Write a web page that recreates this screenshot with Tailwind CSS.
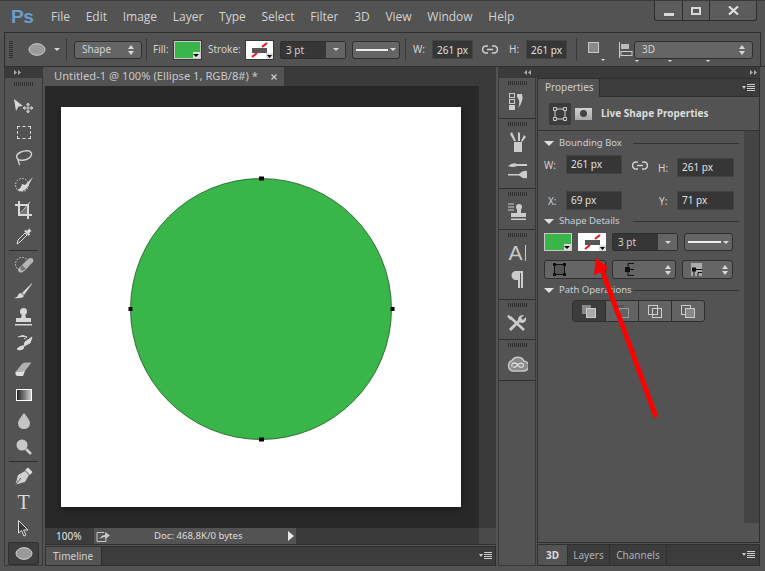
<!DOCTYPE html>
<html lang="en">
<head>
  <meta charset="UTF-8" />
  <title>Photoshop CS6</title>
  <script src="https://cdn.jsdelivr.net/npm/@tailwindcss/browser@4"></script>
</head>
<body class="bg-[#535353]">
<div class="relative w-[765px] h-[571px] overflow-hidden bg-[#535353] border-t border-[#3a3a3a] text-[#d2d2d2] text-[10px] whitespace-nowrap font-['Noto_Sans',sans-serif]">

  <!-- menu bar -->
  <div class="flex items-start h-[31px]">
    <div class="ml-[11px] mt-[2px] w-[40px] h-[28px] text-[#6b9ccc] text-[19px] tracking-[-0.5px] leading-[28px] font-bold font-['Liberation_Sans',sans-serif]">Ps</div>
    <div class="flex gap-[15.700px] mt-[7px] text-[12px] leading-[18px] font-['Open_Sans',sans-serif]">
      <span>File</span><span>Edit</span><span>Image</span><span>Layer</span><span>Type</span><span>Select</span><span>Filter</span><span>3D</span><span>View</span><span>Window</span><span>Help</span>
    </div>
    <div class="ml-auto mr-[8px] flex h-[20px] border border-t-0 border-[#2e2e2e] rounded-b-[3px] bg-[#5c5c5c] w-[103px]">
      <div class="w-[28px] flex items-end justify-center pb-[4px] border-r border-[#2e2e2e]"><div class="w-[10px] h-[3px] bg-[#d8d8d8]"></div></div>
      <div class="w-[27px] flex items-center justify-center border-r border-[#2e2e2e]"><div class="w-[10px] h-[8px] border-2 border-[#d8d8d8]"></div></div>
      <div class="flex-1 flex items-center justify-center">
        <svg width="11" height="9" viewBox="0 0 11 9"><path d="M1 .5 L10 8.500 M10 .5 L1 8.500" stroke="#dedede" stroke-width="2.200"/></svg>
      </div>
    </div>
  </div>

  <!-- options bar -->
  <div class="mx-[4px] h-[34px] border border-[#2f2f2f] border-b-0 flex items-center">
    <div class="ml-[4px] w-[4px] h-[18px] bg-[repeating-linear-gradient(#2f2f2f_0_1px,transparent_1px_2px)]"></div>
    <svg class="ml-[15px]" width="18" height="13" viewBox="0 0 18 13"><ellipse cx="9" cy="6.500" rx="8" ry="5.800" fill="#9a9a9a" stroke="#cfcfcf"/></svg>
    <div class="ml-[8px] border-x-[3px] border-x-transparent border-t-[3px] border-t-[#d8d8d8]"></div>
    <div class="ml-[6px] w-px h-[23px] bg-[#3a3a3a]"></div>
    <div class="ml-[7px] w-[68px] h-[18px] rounded-[3px] border border-[#2f2f2f] bg-[#656565] flex items-center px-[7px]">
      <span class="flex-1">Shape</span>
      <svg width="6" height="10" viewBox="0 0 6 10"><path d="M3 0 L6 4 H0 Z M3 10 L0 6 H6 Z" fill="#d8d8d8"/></svg>
    </div>
    <div class="ml-[4px] w-px h-[23px] bg-[#3a3a3a]"></div>
    <span class="ml-[6px] w-[21px]">Fill:</span>
    <div class="w-[27px] h-[18px] border border-[#c8c8c8] bg-[#39b54a] relative outline outline-[#3a3a3a]">
      <div class="absolute right-0 bottom-0 w-[7px] h-[6px] bg-[#dcdcdc]"></div>
      <div class="absolute right-[1px] bottom-[1px] border-x-[3px] border-x-transparent border-t-[3px] border-t-black"></div>
    </div>
    <span class="ml-[7px] w-[38px]">Stroke:</span>
    <svg width="27" height="18" viewBox="0 0 27 18" class="outline outline-[#3a3a3a]">
      <rect width="27" height="18" fill="#fff"/><rect x="6" y="7" width="15" height="5" fill="#555"/>
      <path d="M16 6 L21 2 M6 16 L11 12" stroke="#e11" stroke-width="2"/><rect x="20" y="12" width="7" height="6" fill="#ddd"/>
      <path d="M21 14 H26 L23.500 17 Z" fill="#000"/>
    </svg>
    <div class="ml-[7px] w-[66px] h-[18px] rounded-[2px] border border-[#2f2f2f] flex">
      <span class="flex-1 bg-[#363636] pl-[5px] leading-[17px]">3 pt</span>
      <div class="w-[19px] bg-[#656565] flex items-center justify-center"><div class="border-x-[3px] border-x-transparent border-t-[3px] border-t-[#d8d8d8]"></div></div>
    </div>
    <div class="ml-[6px] w-[48px] h-[18px] rounded-[3px] border border-[#2f2f2f] bg-[#656565] flex items-center px-[3px] gap-[2px]">
      <div class="flex-1 h-[2px] bg-[#eeeeee]"></div>
      <div class="border-x-[3px] border-x-transparent border-t-[3px] border-t-[#d8d8d8]"></div>
    </div>
    <div class="ml-[5px] w-px h-[23px] bg-[#3a3a3a]"></div>
    <span class="ml-[7px] w-[19px]">W:</span>
    <div class="w-[41px] h-[19px] bg-[#363636] border border-[#444] text-center leading-[18px] text-[#e0e0e0]">261 px</div>
    <svg class="ml-[9px]" width="16" height="9" viewBox="0 0 16 9"><path d="M6 1 H4 a3.500 3.500 0 0 0 0 7 H6 M10 1 H12 a3.500 3.500 0 0 1 0 7 H10 M5 4.500 H11" stroke="#d0d0d0" stroke-width="1.600" fill="none"/></svg>
    <span class="ml-[11px] w-[17px]">H:</span>
    <div class="w-[41px] h-[19px] bg-[#363636] border border-[#444] text-center leading-[18px] text-[#e0e0e0]">261 px</div>
    <div class="ml-[9px] w-px h-[23px] bg-[#3a3a3a]"></div>
    <div class="ml-[11px] w-[11px] h-[11px] -mt-[4px] border border-[#c8c8c8] bg-[#8a8a8a] relative">
      <div class="absolute left-[12px] top-[16px] border-x-[2px] border-x-transparent border-t-[2px] border-t-[#e0e0e0]"></div>
    </div>
    <svg class="ml-[20px]" width="15" height="16" viewBox="0 0 15 16"><path d="M.5 0 V16" stroke="#ccc"/><rect x="2" y="2" width="8" height="5" fill="#bbb"/><rect x="2" y="9.500" width="11" height="4" fill="none" stroke="#ccc"/></svg>
    <div class="relative w-[119px] h-[18px] rounded-[3px] border border-[#2f2f2f] bg-[#656565] flex items-center px-[7px]">
      <span class="flex-1">3D</span>
      <svg width="6" height="10" viewBox="0 0 6 10"><path d="M3 0 L6 4 H0 Z M3 10 L0 6 H6 Z" fill="#d8d8d8"/></svg>
      <div class="absolute left-0 top-[18px] border-x-[2px] border-x-transparent border-t-[2px] border-t-[#e0e0e0]"></div>
      <div class="absolute left-[33px] top-[18px] border-x-[2px] border-x-transparent border-t-[2px] border-t-[#e0e0e0]"></div>
      <div class="absolute left-[71px] top-[18px] border-x-[2px] border-x-transparent border-t-[2px] border-t-[#e0e0e0]"></div>
    </div>
  </div>

  <!-- work area -->
  <div class="flex h-[500px] ml-[4px] border-t border-[#2f2f2f]">

    <!-- tools -->
    <div class="w-[39px] flex flex-col border-x border-[#3a3a3a] border-b">
      <div class="h-[11px] bg-[#3a3a3a] flex items-center pl-[9px]">
        <svg width="7" height="5" viewBox="0 0 7 5"><path d="M0 0 L3 2.500 L0 5 Z M4 0 L7 2.500 L4 5 Z" fill="#aaa"/></svg>
      </div>
      <div class="mt-[4px] mx-auto w-[19px] h-[4px] bg-[repeating-linear-gradient(90deg,#2f2f2f_0_1px,transparent_1px_2px)]"></div>
      <div class="mt-[7px] flex flex-col items-center">
        <div class="h-[26px] flex items-center justify-center"><svg width="20" height="16" viewBox="0 0 20 16"><path d="M0 1 L9 8 L4.500 8.500 L2 13 Z" fill="#d8d8d8"/><path d="M14 5 V15 M9 10 H19 M14 5 l-1.500 2 h3 Z M14 15 l-1.500-2 h3 Z M9 10 l2-1.500 v3 Z M19 10 l-2-1.500 v3 Z" stroke="#d0d0d0" fill="none"/></svg></div>
        <div class="h-[26px] flex items-center justify-center"><div class="w-[14px] h-[13px] border border-dashed border-[#d8d8d8]"></div></div>
        <div class="h-[26px] flex items-center justify-center"><svg width="18" height="16" viewBox="0 0 18 16"><path d="M2 8 C0 3 9 0 14 1 C19 3 16 9 9 10 C6 10.500 3 10 2 8 Z M2 8 C4 10 3 13 5 15" stroke="#cfcfcf" stroke-width="1.400" fill="none"/></svg></div>
        <div class="h-[26px] flex items-center justify-center"><svg width="20" height="17" viewBox="0 0 20 17"><circle cx="8" cy="9" r="6.500" stroke="#d8d8d8" stroke-dasharray="1.500 1.500" fill="none"/><path d="M19 1 L11 9 L8 8 Q7 13 3 14 Q9 17 13 12 Z" fill="#d8d8d8"/></svg></div>
        <div class="h-[26px] flex items-center justify-center"><svg width="17" height="18" viewBox="0 0 17 18"><path d="M4 0 V14 H17 M0 4 H13 V18" stroke="#d8d8d8" stroke-width="2" fill="none"/><path d="M4 14 L15 1" stroke="#d8d8d8"/><path d="M5 13 L12 5 V13 Z" fill="#777"/></svg></div>
        <div class="h-[26px] flex items-center justify-center"><svg width="16" height="17" viewBox="0 0 16 17"><path d="M1 16 L2 12 L9 5 L11 7 L4 14 Z" fill="none" stroke="#d8d8d8"/><path d="M8 3 L13 8 L14 6 L13 5 L15.500 3 L13 .5 L11 3 L10 2 Z" fill="#d8d8d8"/></svg></div>
        <div class="my-[1px] w-[29px] h-px bg-[#2f2f2f]"></div>
        <div class="h-[26px] flex items-center justify-center"><svg width="20" height="18" viewBox="0 0 20 18"><circle cx="8" cy="8" r="6.500" stroke="#d8d8d8" stroke-dasharray="1.500 1.500" fill="none"/><path d="M5 12 L14 3 Q17 1 19 3 Q20 6 18 7 L9 16 Q6 17 5 16 Q3 14 5 12 Z" fill="#b5b5b5"/><path d="M8 9 L12 13 L8 15 L6 12 Z" fill="#777"/></svg></div>
        <div class="h-[26px] flex items-center justify-center"><svg width="19" height="17" viewBox="0 0 19 17"><path d="M18 0 L8 10 L10 12 L18 1 Z" fill="#d8d8d8"/><path d="M7 10 L10 13 Q8 16 0 15 Q4 14 4 12 Q5 10 7 10 Z" fill="#d8d8d8"/></svg></div>
        <div class="h-[26px] flex items-center justify-center"><svg width="19" height="18" viewBox="0 0 19 18"><circle cx="9.500" cy="3.500" r="3.500" fill="#d8d8d8"/><path d="M8 6 H11 L12 10 H7 Z" fill="#d8d8d8"/><rect x="2" y="10" width="15" height="4" fill="#d8d8d8"/><rect x="1" y="16" width="17" height="1.500" fill="#d8d8d8"/></svg></div>
        <div class="h-[26px] flex items-center justify-center"><svg width="18" height="18" viewBox="0 0 18 18"><path d="M3 3 Q8 0 12 3 M12 3 L9 5 M10 8 L17 3 L15 9 L9 12 Z M2 15 Q6 11 9 12 L8 15 Q4 17 2 15" stroke="#d8d8d8" fill="#d8d8d8"/></svg></div>
        <div class="h-[26px] flex items-center justify-center"><svg width="17" height="15" viewBox="0 0 17 15"><path d="M.5 10 L7 2 Q8 .5 11 .5 H16.500 L10 9 Z" fill="#b0b0b0"/><path d="M.5 10 L10 9 L8 14 H3 Q0 14 .5 10 Z" fill="#e0e0e0"/></svg></div>
        <div class="h-[26px] flex items-center justify-center"><div class="w-[16px] h-[12px] border border-white bg-[linear-gradient(90deg,#222,#ccc)]"></div></div>
        <div class="h-[26px] flex items-center justify-center"><svg width="12" height="16" viewBox="0 0 12 16"><path d="M6 0 Q12 7 12 10.500 A6 5.500 0 0 1 0 10.500 Q0 7 6 0 Z" fill="#c4c4c4"/></svg></div>
        <div class="h-[26px] flex items-center justify-center"><svg width="16" height="16" viewBox="0 0 16 16"><circle cx="6" cy="6" r="5.500" fill="#c8c8c8"/><path d="M10 10 L15 15" stroke="#d0d0d0" stroke-width="2.500"/></svg></div>
        <div class="my-[1px] w-[29px] h-px bg-[#2f2f2f]"></div>
        <div class="h-[26px] flex items-center justify-center"><svg width="18" height="18" viewBox="0 0 18 18"><path d="M.5 17.500 L3 8 L10 4 L14 8 L10 15 Z" fill="#cfcfcf"/><path d="M10 3 L13 .5 L17.500 5 L15 8 Z" fill="#dedede"/><path d="M.5 17.500 L6 11" stroke="#535353"/></svg></div>
        <div class="h-[26px] flex items-center justify-center text-[20px] leading-[20px] text-[#d8d8d8] font-['Liberation_Serif',serif]">T</div>
        <div class="h-[26px] flex items-center justify-center"><svg width="11" height="17" viewBox="0 0 11 17"><path d="M.5 .5 V13 L3.500 10.500 L6 16 L8 15 L5.500 10 H10 Z" fill="#3a3a3a" stroke="#e0e0e0"/></svg></div>
        <div class="mt-[1px] w-[31px] h-[23px] rounded-[2px] bg-[#3e3e3e] border border-[#303030] flex items-center justify-center"><svg width="18" height="13" viewBox="0 0 18 13"><ellipse cx="9" cy="6.500" rx="8" ry="5.800" fill="#9a9a9a" stroke="#d8d8d8"/></svg></div>
      </div>
    </div>

    <!-- document column -->
    <div class="ml-[2px] w-[451px] flex flex-col">
      <div class="h-[19px] bg-[#3a3a3a] flex pt-0">
        <div class="w-[239px] h-[19px] bg-[#535353] pl-[9px] flex items-center">
          <span class="flex-1 text-[#c8c8c8] text-[11.200px]">Untitled-1 @ 100% (Ellipse 1, RGB/8#) *</span>
          <svg class="mr-[7px]" width="6" height="6" viewBox="0 0 6 6"><path d="M.5 .5 L5.500 5.500 M5.500 .5 L.5 5.500" stroke="#c8c8c8" stroke-width="1.300"/></svg>
        </div>
      </div>
      <div class="h-[442px] flex">
        <div class="flex-1 bg-[#282828] pl-[16px] pt-[21px]">
          <div class="w-[400px] h-[400px] bg-white shadow-[0_2px_6px_rgba(0,0,0,0.4)]">
            <svg width="400" height="400" viewBox="0 0 400 400">
              <circle cx="200" cy="202" r="130.500" fill="#39b54a" stroke="#1c5a25" stroke-width=".8"/>
              <rect x="198" y="69.500" width="5" height="4" fill="#000"/>
              <rect x="198" y="330.500" width="5" height="4" fill="#000"/>
              <rect x="67.500" y="200" width="4" height="4" fill="#000"/>
              <rect x="329.500" y="200" width="4" height="4" fill="#000"/>
            </svg>
          </div>
        </div>
        <div class="w-[17px] bg-[#3a3a3a]"></div>
      </div>
      <div class="h-[17px] flex border-b border-[#2f2f2f] bg-[#404040]">
        <div class="w-[49px] bg-[#3c3c3c] pl-[11px] leading-[16px] text-[#e4e4e4]">100%</div>
        <div class="w-[202px] bg-[#535353] flex items-center">
          <svg class="ml-[2px]" width="14" height="11" viewBox="0 0 14 11"><path d="M8 1.500 H1 V10.500 H10 V7" stroke="#c8c8c8" fill="none"/><path d="M4 8 Q5 4 9 4 V1 L14 4.500 L9 8 V6 Q6 6 4 8 Z" fill="#c8c8c8"/></svg>
          <span class="ml-[44px] flex-1 text-[#dcdcdc] text-[9.600px]">Doc: 468,8K/0 bytes</span>
          <div class="mr-[2px] border-y-[5px] border-y-transparent border-l-[6px] border-l-[#e8e8e8]"></div>
        </div>
        <div class="flex-1 bg-[#3a3a3a]"></div>
        <div class="w-[17px] bg-[#4a4a4a]"></div>
      </div>
      <div class="mt-[1px] h-[20px] border border-[#2f2f2f] bg-[#3c3c3c] flex items-center">
        <div class="w-[56px] h-full bg-[#535353] border-r border-[#2f2f2f] pl-[7px] leading-[18px] text-[#c8d0d8]">Timeline</div>
        <svg class="ml-auto mr-[3px]" width="13" height="8" viewBox="0 0 13 8"><path d="M0 2 H4 L2 5 Z" fill="#ccc"/><path d="M5 .5 H13 M5 2.500 H13 M5 4.500 H13 M5 6.500 H13" stroke="#ccc"/></svg>
      </div>
    </div>

    <!-- dock -->
    <div class="ml-[2px] w-[262px] flex flex-col">
      <div class="h-[11px] bg-[#3a3a3a] flex items-center">
        <svg class="ml-[26px]" width="7" height="5" viewBox="0 0 7 5"><path d="M3 0 L0 2.500 L3 5 Z M7 0 L4 2.500 L7 5 Z" fill="#aaa"/></svg>
        <svg class="ml-auto mr-[3px]" width="7" height="5" viewBox="0 0 7 5"><path d="M0 0 L3 2.500 L0 5 Z M4 0 L7 2.500 L4 5 Z" fill="#aaa"/></svg>
      </div>
      <div class="flex flex-1">

        <!-- collapsed panel icons -->
        <div class="w-[38px] flex flex-col border-x border-b border-[#3a3a3a]">
          <div class="h-[41px] border-b border-[#303030] flex flex-col items-center pt-[3px]">
            <div class="w-[19px] h-[4px] bg-[repeating-linear-gradient(90deg,#2f2f2f_0_1px,transparent_1px_2px)]"></div>
            <svg class="mt-[8px]" width="16" height="18" viewBox="0 0 16 18"><rect x=".5" y=".5" width="5" height="4" fill="none" stroke="#ccc"/><rect x=".5" y="6.500" width="5" height="4" fill="none" stroke="#ccc"/><rect x="0" y="12" width="6" height="5" fill="#ccc"/><path d="M8 1 H13 Q15 8 9 15 Q12 8 8 4 Z" fill="#ccc"/></svg>
          </div>
          <div class="h-[70px] border-b border-[#303030] flex flex-col items-center pt-[3px]">
            <div class="w-[19px] h-[4px] bg-[repeating-linear-gradient(90deg,#2f2f2f_0_1px,transparent_1px_2px)]"></div>
            <svg class="mt-[6px]" width="17" height="20" viewBox="0 0 17 20"><rect x="5" y="10" width="8" height="10" fill="#ccc"/><path d="M5 9 L1 2 L3 0 L7 9 M9 9 V0 L11 1 L11 9 M12 9 L15 3 L17 5 L13 10" fill="#ccc"/></svg>
            <svg class="mt-[10px]" width="19" height="17" viewBox="0 0 19 17"><path d="M0 4 Q5 0 9 2 H19 V4 H9 Q5 6 0 4 Z M0 12 H11 Q15 8 19 9 V16 Q15 17 11 13.500 H0 Z" fill="#ccc"/></svg>
          </div>
          <div class="h-[41px] border-b border-[#303030] flex flex-col items-center pt-[3px]">
            <div class="w-[19px] h-[4px] bg-[repeating-linear-gradient(90deg,#2f2f2f_0_1px,transparent_1px_2px)]"></div>
            <svg class="mt-[7px]" width="18" height="18" viewBox="0 0 18 18"><path d="M0 1 H6 M0 4 H6 M0 7 H6" stroke="#ccc"/><circle cx="11" cy="4" r="3" fill="#ccc"/><rect x="9" y="6" width="4" height="4" fill="#ccc"/><rect x="3" y="10" width="15" height="4" fill="#ccc"/><rect x="3" y="15.500" width="15" height="1.500" fill="#ccc"/></svg>
          </div>
          <div class="h-[70px] border-b border-[#303030] flex flex-col items-center pt-[3px]">
            <div class="w-[19px] h-[4px] bg-[repeating-linear-gradient(90deg,#2f2f2f_0_1px,transparent_1px_2px)]"></div>
            <div class="mt-[6px] h-[20px] flex items-center text-[#c8c8c8] text-[21px] leading-[20px] font-['Liberation_Sans',sans-serif]">A<span class="w-px h-[16px] bg-[#c8c8c8] ml-[2px]"></span></div>
            <svg class="mt-[8px]" width="12" height="17" viewBox="0 0 12 17"><path d="M5 0 H12 V17 H10 V2 H9 V17 H7 V9 H5 A4.500 4.500 0 0 1 5 0 Z" fill="#ccc"/></svg>
          </div>
          <div class="h-[40px] border-b border-[#303030] flex flex-col items-center pt-[3px]">
            <div class="w-[19px] h-[4px] bg-[repeating-linear-gradient(90deg,#2f2f2f_0_1px,transparent_1px_2px)]"></div>
            <svg class="mt-[8px]" width="20" height="17" viewBox="0 0 20 17"><path d="M3 15 L13 5" stroke="#ccc" stroke-width="3"/><path d="M11 5 Q11 0 17 0 L14 3 L16 5 L19 2 Q20 8 14 8 Z" fill="#ccc"/><path d="M3 2 L17 15" stroke="#ccc" stroke-width="2.500"/><path d="M0 1 L2 0 L5 3 L3 5 Z" fill="#ccc"/></svg>
          </div>
          <div class="h-[41px] border-b border-[#303030] flex flex-col items-center pt-[3px]">
            <div class="w-[19px] h-[4px] bg-[repeating-linear-gradient(90deg,#2f2f2f_0_1px,transparent_1px_2px)]"></div>
            <svg class="mt-[9px]" width="21" height="16" viewBox="0 0 21 16"><path d="M6 15 A5.500 5.500 0 0 1 5 4.500 A7 7 0 0 1 17 5 A5 5 0 0 1 16 15 Z" fill="#8a8a8a" stroke="#c8c8c8" stroke-width="1.500"/><path d="M5 11 Q4 7 7.500 7 Q10 7 11 9.500 Q13 12 15.500 11 Q17.500 9 15.500 7.500 Q12 6.500 10 9.500 Q8 12 6 11" stroke="#dadada" stroke-width="1.300" fill="none"/></svg>
          </div>
        </div>

        <!-- properties -->
        <div class="ml-[1px] w-[223px] flex flex-col">
          <div class="flex-1 border border-[#2f2f2f] flex flex-col">
            <div class="h-[18px] bg-[#3c3c3c] flex border-b border-[#2f2f2f]">
              <div class="w-[62px] h-[18px] bg-[#535353] border-r border-[#2f2f2f] pl-[7px] leading-[17px] text-[#c8d0d8]">Properties</div>
              <svg class="ml-auto mr-[4px] mt-[5px]" width="13" height="8" viewBox="0 0 13 8"><path d="M0 2 H4 L2 5 Z" fill="#ccc"/><path d="M5 .5 H13 M5 2.500 H13 M5 4.500 H13 M5 6.500 H13" stroke="#ccc"/></svg>
            </div>
            <div class="h-[34px] border-b border-[#333] flex items-center pl-[11px]">
              <div class="w-[22px] h-[22px] rounded-[2px] bg-[#3c3c3c] flex items-center justify-center">
                <svg width="14" height="14" viewBox="0 0 14 14"><rect x="2" y="2" width="10" height="10" fill="none" stroke="#ccc"/><path d="M.5 .5 h3 v3 h-3 Z M10.500 .5 h3 v3 h-3 Z M.5 10.500 h3 v3 h-3 Z M10.500 10.500 h3 v3 h-3 Z" fill="#3c3c3c" stroke="#ccc"/></svg>
              </div>
              <div class="ml-[4px] w-[17px] h-[12px] bg-[linear-gradient(#d0d0d0,#aaa)] flex items-center justify-center"><div class="w-[7px] h-[7px] rounded-full bg-[#444]"></div></div>
              <span class="ml-[9px] font-bold text-[#dcdcdc]">Live Shape Properties</span>
            </div>
            <div class="flex flex-1">
              <div class="flex-1 pl-[6px] pt-[6px]">
                <div class="flex items-center h-[13px]">
                  <div class="border-x-[5px] border-x-transparent border-t-[5px] border-t-[#e0e0e0]"></div>
                  <span class="ml-[5px] w-[74px] text-[#c8d0d8] text-[9.500px]">Bounding Box</span>
                  <div class="w-[106px] h-px bg-[#333]"></div>
                </div>
                <div class="mt-[5px] flex items-start h-[23px]">
                  <span class="w-[22px] leading-[20px]">W:</span>
                  <div class="w-[56px] h-[19px] bg-[#363636] border border-[#444] pl-[4px] leading-[17px] text-[#e0e0e0]">261 px</div>
                  <svg class="ml-[10px] mt-[6px]" width="16" height="9" viewBox="0 0 16 9"><path d="M6 1 H4 a3.500 3.500 0 0 0 0 7 H6 M10 1 H12 a3.500 3.500 0 0 1 0 7 H10 M5 4.500 H11" stroke="#d0d0d0" stroke-width="1.600" fill="none"/></svg>
                  <span class="ml-[10px] w-[19px] mt-[3px] leading-[20px]">H:</span>
                  <div class="mt-[3px] w-[57px] h-[19px] bg-[#363636] border border-[#444] pl-[4px] leading-[17px] text-[#e0e0e0]">261 px</div>
                </div>
                <div class="mt-[13px] flex items-start h-[19px]">
                  <span class="w-[22px] pl-[4px] leading-[20px]">X:</span>
                  <div class="w-[56px] h-[19px] bg-[#363636] border border-[#444] pl-[4px] leading-[17px] text-[#e0e0e0]">69 px</div>
                  <span class="ml-[36px] w-[19px] pl-[1px] leading-[20px]">Y:</span>
                  <div class="w-[57px] h-[19px] bg-[#363636] border border-[#444] pl-[4px] leading-[17px] text-[#e0e0e0]">71 px</div>
                </div>
                <div class="mt-[5px] flex items-center h-[13px]">
                  <div class="border-x-[5px] border-x-transparent border-t-[5px] border-t-[#e0e0e0]"></div>
                  <span class="ml-[5px] w-[74px] text-[#c8d0d8] text-[9.500px]">Shape Details</span>
                  <div class="w-[106px] h-px bg-[#333]"></div>
                </div>
                <div class="mt-[5px] flex items-center h-[18px]">
                  <div class="w-[28px] h-[18px] border border-[#c8c8c8] bg-[#39b54a] relative">
                    <div class="absolute right-0 bottom-0 w-[7px] h-[6px] bg-[#dcdcdc]"></div>
                    <div class="absolute right-[1px] bottom-[1px] border-x-[3px] border-x-transparent border-t-[3px] border-t-black"></div>
                  </div>
                  <svg class="ml-[6px]" width="28" height="18" viewBox="0 0 28 18">
                    <rect width="28" height="18" fill="#fff"/><rect x="7" y="7" width="15" height="5" fill="#555"/>
                    <path d="M17 6 L22 2 M7 16 L12 12" stroke="#e11" stroke-width="2"/><rect x="21" y="12" width="7" height="6" fill="#ddd"/>
                    <path d="M22 14 H27 L24.500 17 Z" fill="#000"/>
                  </svg>
                  <div class="ml-[6px] w-[66px] h-[18px] rounded-[2px] border border-[#2f2f2f] flex">
                    <span class="flex-1 bg-[#363636] pl-[5px] leading-[17px]">3 pt</span>
                    <div class="w-[19px] bg-[#656565] flex items-center justify-center"><div class="border-x-[3px] border-x-transparent border-t-[3px] border-t-[#d8d8d8]"></div></div>
                  </div>
                  <div class="ml-[6px] w-[49px] h-[18px] rounded-[3px] border border-[#2f2f2f] bg-[#656565] flex items-center px-[3px] gap-[2px]">
                    <div class="flex-1 h-[2px] bg-[#eeeeee]"></div>
                    <div class="border-x-[3px] border-x-transparent border-t-[3px] border-t-[#d8d8d8]"></div>
                  </div>
                </div>
                <div class="mt-[9px] flex items-center h-[19px]">
                  <div class="w-[62px] h-[19px] rounded-[3px] border border-[#2f2f2f] bg-[#656565] pl-[8px] flex items-center">
                    <svg width="13" height="13" viewBox="0 0 13 13"><rect x="1.500" y="1.500" width="10" height="10" fill="#555" stroke="#111"/><path d="M0 0 h3 v3 h-3 Z M10 0 h3 v3 h-3 Z M0 10 h3 v3 h-3 Z M10 10 h3 v3 h-3 Z" fill="#111"/></svg>
                  </div>
                  <div class="ml-[6px] w-[64px] h-[19px] rounded-[3px] border border-[#2f2f2f] bg-[#656565] pl-[12px] pr-[4px] flex items-center justify-between">
                    <svg width="9" height="13" viewBox="0 0 9 13"><path d="M3 .5 H9 M3 .5 V12.500 H9 M3 6.500 H9" stroke="#111" fill="none"/><rect x="0" y="4" width="5" height="5" fill="#111"/></svg>
                    <svg width="6" height="10" viewBox="0 0 6 10"><path d="M3 0 L6 4 H0 Z M3 10 L0 6 H6 Z" fill="#d8d8d8"/></svg>
                  </div>
                  <div class="ml-[6px] w-[51px] h-[19px] rounded-[3px] border border-[#2f2f2f] bg-[#656565] pl-[8px] pr-[4px] flex items-center justify-between">
                    <svg width="12" height="13" viewBox="0 0 12 13"><rect x="0" y="0" width="11" height="13" fill="#aaa"/><path d="M3 6.500 H11 M3 6.500 V13 M7 9.500 H11 M7 9.500 V13" stroke="#111" fill="none"/><rect x="1" y="4.500" width="4" height="4" fill="#111"/></svg>
                    <svg width="6" height="10" viewBox="0 0 6 10"><path d="M3 0 L6 4 H0 Z M3 10 L0 6 H6 Z" fill="#d8d8d8"/></svg>
                  </div>
                </div>
                <div class="mt-[5px] flex items-center h-[13px]">
                  <div class="border-x-[5px] border-x-transparent border-t-[5px] border-t-[#e0e0e0]"></div>
                  <span class="ml-[5px] w-[74px] text-[#c8d0d8] text-[9.500px]">Path Operations</span>
                  <div class="w-[106px] h-px bg-[#333]"></div>
                </div>
                <div class="mt-[3px] ml-[28px] w-[133px] h-[22px] rounded-[3px] border border-[#2f2f2f] bg-[#636363] flex">
                  <div class="flex-1 bg-[#3c3c3c] border-r border-[#2f2f2f] flex items-center justify-center">
                    <svg width="14" height="13" viewBox="0 0 14 13"><rect x="0" y="0" width="9" height="9" fill="#888"/><rect x="4.500" y="3.500" width="9" height="9" fill="#aaa" stroke="#ccc"/></svg>
                  </div>
                  <div class="flex-1 border-r border-[#2f2f2f] flex items-center justify-center">
                    <svg width="14" height="13" viewBox="0 0 14 13"><rect x="0" y="0" width="9" height="9" fill="#555"/><rect x="4.500" y="3.500" width="9" height="9" fill="#636363" stroke="#999"/></svg>
                  </div>
                  <div class="flex-1 border-r border-[#2f2f2f] flex items-center justify-center">
                    <svg width="14" height="13" viewBox="0 0 14 13"><rect x=".5" y=".5" width="9" height="9" fill="none" stroke="#ccc"/><rect x="4.500" y="3.500" width="9" height="9" fill="none" stroke="#ccc"/></svg>
                  </div>
                  <div class="flex-1 flex items-center justify-center">
                    <svg width="14" height="13" viewBox="0 0 14 13"><rect x=".5" y=".5" width="9" height="9" fill="none" stroke="#ccc"/><rect x="4.500" y="3.500" width="9" height="9" fill="#888" stroke="#ccc"/></svg>
                  </div>
                </div>
              </div>
              <div class="w-[15px] mb-[19px] bg-[#444444]"></div>
            </div>
          </div>
          <div class="mt-[1px] h-[22px] border border-[#2f2f2f] bg-[#3c3c3c] flex">
            <div class="w-[29px] bg-[#535353] text-center leading-[20px] font-bold text-[#dcdcdc]">3D</div>
            <div class="w-[43px] border-x border-[#2f2f2f] text-center leading-[20px] text-[#a8b0b8]">Layers</div>
            <div class="w-[57px] border-r border-[#2f2f2f] text-center leading-[20px] text-[#a8b0b8]">Channels</div>
            <svg class="ml-auto mr-[4px] mt-[6px]" width="13" height="8" viewBox="0 0 13 8"><path d="M0 2 H4 L2 5 Z" fill="#ccc"/><path d="M5 .5 H13 M5 2.500 H13 M5 4.500 H13 M5 6.500 H13" stroke="#ccc"/></svg>
          </div>
        </div>
      </div>
    </div>
  </div>

  <!-- red arrow drawn over the screenshot -->
  <svg class="absolute left-0 top-[-1px] pointer-events-none" width="765" height="571" viewBox="0 0 765 571">
    <path d="M656 417 L602 270" stroke="#ff0000" stroke-width="5"/>
    <path d="M596 258 L609 268 L594 275 Z" fill="#ff0000"/>
  </svg>
</div>
</body>
</html>
